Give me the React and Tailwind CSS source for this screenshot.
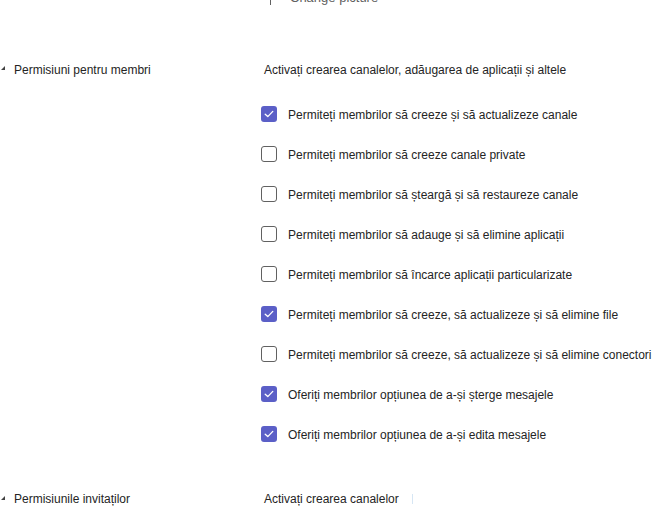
import React from "react";

const rows = [
  { label: "Permiteți membrilor să creeze și să actualizeze canale", checked: true },
  { label: "Permiteți membrilor să creeze canale private", checked: false },
  { label: "Permiteți membrilor să șteargă și să restaureze canale", checked: false },
  { label: "Permiteți membrilor să adauge și să elimine aplicații", checked: false },
  { label: "Permiteți membrilor să încarce aplicații particularizate", checked: false },
  { label: "Permiteți membrilor să creeze, să actualizeze și să elimine file", checked: true },
  { label: "Permiteți membrilor să creeze, să actualizeze și să elimine conectori", checked: false },
  { label: "Oferiți membrilor opțiunea de a-și șterge mesajele", checked: true },
  { label: "Oferiți membrilor opțiunea de a-și edita mesajele", checked: true },
];

function Caret() {
  return (
    <svg width="6" height="6" viewBox="0 0 6 6" className="shrink-0">
      <path d="M5 1 L5 5 L1 5 Z" fill="#424242" />
    </svg>
  );
}

function Checkbox({ checked }) {
  if (checked) {
    return (
      <span className="flex h-4 w-4 shrink-0 items-center justify-center rounded-[3px] bg-[#5b5fc7]">
        <svg width="10" height="8" viewBox="0 0 10 8">
          <path d="M1.2 4.2 L3.8 6.6 L8.8 1.4" fill="none" stroke="#ffffff" strokeWidth="1.3" strokeLinecap="round" strokeLinejoin="round" />
        </svg>
      </span>
    );
  }
  return <span className="h-4 w-4 shrink-0 rounded-[3px] border border-[#616161] bg-white" />;
}

export default function App() {
  return (
    <div className="h-[521px] w-[671px] overflow-hidden bg-white text-[12px] text-[#242424]" style={{ fontFamily: '"Liberation Sans", Arial, sans-serif' }}>
      {/* picture link from the section above */}
      <div className="-mt-[9px] flex h-[14px] items-center pl-[270px]">
        <span className="h-[14px] w-px bg-[#616161]" />
        <span className="ml-[19px] text-[13px] text-[#616161]">Change picture</span>
      </div>

      {/* member permissions */}
      <div className="mt-[45px] flex">
        <div className="flex h-10 w-[264px] items-center">
          <div className="flex items-center">
            <span className="mb-[4px]"><Caret /></span>
            <span className="ml-[8px]">Permisiuni pentru membri</span>
          </div>
        </div>
        <div className="flex flex-col">
          <div className="flex h-10 items-center">Activați crearea canalelor, adăugarea de aplicații și altele</div>
          <div className="mt-[4px] flex flex-col">
            {rows.map((r) => (
              <label key={r.label} className="-ml-[3px] flex h-10 items-center gap-[11px] whitespace-nowrap">
                <Checkbox checked={r.checked} />
                <span className="mt-[2px]">{r.label}</span>
              </label>
            ))}
          </div>
        </div>
      </div>

      {/* guest permissions */}
      <div className="mt-[25px] flex">
        <div className="flex h-10 w-[264px] items-center">
          <span className="mb-[2px]"><Caret /></span>
          <span className="ml-[8px]">Permisiunile invitaților</span>
        </div>
        <div className="flex h-10 items-center">
          <span>Activați crearea canalelor</span>
          <span className="ml-[13px] h-[10px] w-px bg-[#d6e6f4]" />
        </div>
      </div>
    </div>
  );
}
